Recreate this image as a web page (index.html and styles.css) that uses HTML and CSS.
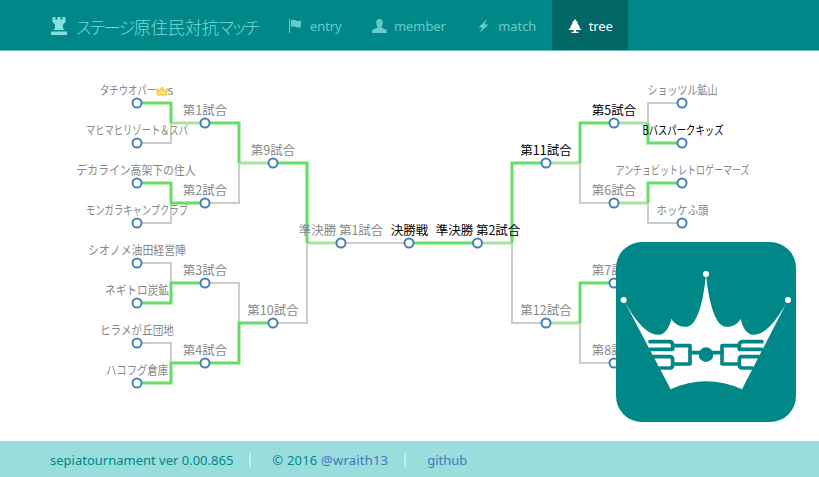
FILE: index.html
```html
<!DOCTYPE html>
<html lang="ja">
<head>
<meta charset="utf-8">
<title>ステージ原住民対抗マッチ</title>
<link rel="stylesheet" href="styles.css">
</head>
<body>
<header class="topbar">
  <a class="brand" href="#">
    <svg class="brand-icon" viewBox="0 0 18 18"><path d="M2.500 0h3v2.500h2V0h3v2.500h2V0h3v5l-2.500 2.500V11l1.500 2H3.500L5 11V7.500L2.500 5z"/><path d="M1 14.500h16V18H1z"/></svg>
    <span><span class="kana">ステージ</span>原住民対抗<span class="kana">マッチ</span></span>
  </a>
  <nav class="nav">
    <a class="nav-item" href="#"><svg class="nav-icon" viewBox="0 0 14 14"><path d="M0 0h1v14H0zM2 1.500c2-1.200 4-.8 5 0s3 .8 5 0v6.500c-2 .9-4 .8-5 0s-3-1-5 0z"/></svg>entry</a>
    <a class="nav-item" href="#"><svg class="nav-icon nav-icon-wide" viewBox="0 0 15 14"><path d="M7.500 0c2 0 3.300 1.500 3.300 3.500S9.500 7.500 9.500 8.300c0 1 5.300 1.700 5.300 3.700v2H.2v-2c0-2 5.300-2.700 5.300-3.700C5.500 7.500 4.200 5.500 4.200 3.500S5.500 0 7.500 0z"/></svg>member</a>
    <a class="nav-item" href="#"><svg class="nav-icon" viewBox="0 0 14 14"><path d="M10 0 1.500 8.500h4L2.500 14l9-8.500h-4z"/></svg>match</a>
    <a class="nav-item is-active" href="#"><svg class="nav-icon" viewBox="0 0 14 14"><path d="M7 0l3.300 4.200H9l3 3.300h-1.300L13.500 11H8.200v1.800h2.300v1.200h-7v-1.200h2.300V11H.5l2.800-3.500H2l3-3.300H3.700z"/></svg>tree</a>
  </nav>
</header>

<main class="stage">
  <svg class="bracket" viewBox="0 0 819 390" width="819" height="390">
    <g transform="translate(0 -51)">
      <g class="wire">
        <path d="M137 143H171V123"/>
        <path d="M137 223H171V203"/>
        <path d="M137 263H171V283"/>
        <path d="M137 343H171V363"/>
        <path d="M205 203H239V163"/>
        <path d="M205 283H239V323"/>
        <path d="M273 323H307V243"/>
        <path d="M307 243H477"/>
        <path d="M512 243V323H546"/>
        <path d="M546 163H580V203H614"/>
        <path d="M546 323H580V363H614"/>
        <path d="M614 123H648V103H682"/>
        <path d="M614 203H648V223H682"/>
      </g>
      <g class="wire-pale">
        <path d="M171 123H205"/>
        <path d="M239 163H273"/>
        <path d="M307 243H341"/>
        <path d="M477 243H512"/>
        <path d="M546 163H580"/>
        <path d="M614 123H648"/>
        <path d="M614 203H648"/>
        <path d="M546 323H580"/>
      </g>
      <g class="wire-win">
        <path d="M137 103H171V123"/>
        <path d="M137 183H171V203H205"/>
        <path d="M137 303H171V283H205"/>
        <path d="M137 383H171V363H239V323H273"/>
        <path d="M205 123H239V163"/>
        <path d="M273 163H307V243"/>
        <path d="M409 243H477"/>
        <path d="M512 243V163H546"/>
        <path d="M580 163V123H614"/>
        <path d="M648 123V143H682"/>
        <path d="M648 203V183H682"/>
        <path d="M580 323V283H614"/>
      </g>
      <g class="nodes">
        <circle cx="137" cy="103" r="4.500"/><circle cx="137" cy="143" r="4.500"/>
        <circle cx="137" cy="183" r="4.500"/><circle cx="137" cy="223" r="4.500"/>
        <circle cx="137" cy="263" r="4.500"/><circle cx="137" cy="303" r="4.500"/>
        <circle cx="137" cy="343" r="4.500"/><circle cx="137" cy="383" r="4.500"/>
        <circle cx="205" cy="123" r="4.500"/><circle cx="205" cy="203" r="4.500"/>
        <circle cx="205" cy="283" r="4.500"/><circle cx="205" cy="363" r="4.500"/>
        <circle cx="273" cy="163" r="4.500"/><circle cx="273" cy="323" r="4.500"/>
        <circle cx="341" cy="243" r="4.500"/><circle cx="409" cy="243" r="4.500"/>
        <circle cx="477.500" cy="243" r="4.500"/>
        <circle cx="546" cy="163" r="4.500"/><circle cx="546" cy="323" r="4.500"/>
        <circle cx="614" cy="123" r="4.500"/><circle cx="614" cy="203" r="4.500"/>
        <circle cx="614" cy="283" r="4.500"/><circle cx="614" cy="363" r="4.500"/>
        <circle cx="682" cy="103" r="4.500"/><circle cx="682" cy="143" r="4.500"/>
        <circle cx="682" cy="183" r="4.500"/><circle cx="682" cy="223" r="4.500"/>
      </g>
      <path class="crown-back" d="M156.500 88.500l2.700 2 2.800-3.500 2.800 3.500 2.700-2-1 6.500h-9z"/>
      <path class="crown-band" d="M158.500 92.500h7v1h-7z"/>
      <g class="labels">
        <text x="128" y="95" textLength="56" lengthAdjust="spacingAndGlyphs">タチウオパー</text>
        <text x="170.500" y="95">s</text>
        <text x="137" y="135" textLength="102" lengthAdjust="spacingAndGlyphs">マヒマヒリゾート＆スパ</text>
        <text x="136" y="175" textLength="119" lengthAdjust="spacingAndGlyphs">デカライン高架下の住人</text>
        <text x="137" y="215" textLength="102" lengthAdjust="spacingAndGlyphs">モンガラキャンプクラブ</text>
        <text x="137" y="255" textLength="98" lengthAdjust="spacingAndGlyphs">シオノメ油田経営陣</text>
        <text x="137" y="295" textLength="64" lengthAdjust="spacingAndGlyphs">ネギトロ炭鉱</text>
        <text x="137" y="335" textLength="74" lengthAdjust="spacingAndGlyphs">ヒラメが丘団地</text>
        <text x="137" y="375" textLength="62" lengthAdjust="spacingAndGlyphs">ハコフグ倉庫</text>
        <text x="205" y="115">第1試合</text>
        <text x="205" y="195">第2試合</text>
        <text x="205" y="275">第3試合</text>
        <text x="205" y="355">第4試合</text>
        <text x="273" y="155">第9試合</text>
        <text x="273" y="315">第10試合</text>
        <text x="341" y="235">準決勝 第1試合</text>
        <text class="on" x="409.500" y="235">決勝戦</text>
        <text class="on" x="478" y="235">準決勝 第2試合</text>
        <text class="on" x="546" y="155">第11試合</text>
        <text x="546" y="315">第12試合</text>
        <text class="on" x="614" y="115">第5試合</text>
        <text x="614" y="195">第6試合</text>
        <text x="614" y="275">第7試合</text>
        <text x="614" y="355">第8試合</text>
        <text x="682.500" y="95" textLength="70" lengthAdjust="spacingAndGlyphs">ショッツル鉱山</text>
        <text class="on" x="683" y="135" textLength="81" lengthAdjust="spacingAndGlyphs">Bバスパークキッズ</text>
        <text x="682.500" y="175" textLength="134" lengthAdjust="spacingAndGlyphs">アンチョビットレトロゲーマーズ</text>
        <text x="682.500" y="215" textLength="52" lengthAdjust="spacingAndGlyphs">ホッケふ頭</text>
      </g>
    </g>
  </svg>
  <svg class="logo" viewBox="48 36 540 540" width="180" height="180">
    <rect class="logo-bg" x="48" y="36" width="540" height="540" rx="78"/>
    <g class="logo-crown">
      <circle cx="71" cy="210" r="9"/><circle cx="318" cy="132" r="9"/><circle cx="564" cy="210" r="9"/>
      <path d="M71 210C100 262 140 320 180 314C200 310 210 285 214 266C225 285 245 292 262 290C295 285 312 200 318 132C324 200 342 285 375 290C392 292 412 285 422 266C426 285 436 310 456 314C496 320 536 262 564 210L426 478Q318 430 212 478Z"/>
    </g>
    <circle class="logo-hub" cx="318" cy="374" r="22"/>
    <g class="logo-lines">
      <path d="M150 335H208Q218 335 218 346V358H150"/>
      <path d="M218 347H270V402H218"/>
      <path d="M160 380H210Q218 380 218 390V405Q218 414 210 414H180"/>
      <path d="M270 368H366"/>
      <path d="M486 335H428Q418 335 418 346V358H486"/>
      <path d="M418 347H366V402H418"/>
      <path d="M476 380H426Q418 380 418 390V405Q418 414 426 414H456"/>
    </g>
  </svg>
</main>

<footer class="foot">
  <span class="foot-item">sepiatournament ver 0.00.865</span>
  <span class="foot-sep"></span>
  <span class="foot-item foot-wide">© 2016 <a class="foot-link" href="#">@wraith13</a></span>
  <span class="foot-sep"></span>
  <a class="foot-link" href="#">github</a>
</footer>
</body>
</html>
```
FILE: styles.css
```css
* { box-sizing: border-box; }
html, body { margin: 0; height: 100%; }
body {
  display: flex;
  flex-direction: column;
  overflow: hidden;
  font-family: "Noto Sans", "Noto Sans CJK JP", sans-serif;
  background: #fff;
}
a { text-decoration: none; color: inherit; }

.topbar {
  height: 51px;
  flex: none;
  display: flex;
  padding-left: 50px;
  background: #008888;
  border-bottom: 1px solid #66bbbb;
  color: #77dddd;
}
.brand {
  display: flex;
  align-items: center;
  gap: 8px;
  width: 223px;
  padding-top: 2px;
  font-size: 17px;
  font-family: "Noto Sans CJK JP", sans-serif;
  font-feature-settings: "palt";
  font-weight: 300;
}
.kana { letter-spacing: -1.500px; }
.brand-icon { width: 18px; height: 18px; fill: #88dddd; flex: none; }
.nav { display: flex; }
.nav-item {
  display: flex;
  align-items: center;
  gap: 7px;
  padding: 2px 15.500px 0 16px;
  font-size: 13px;
  letter-spacing: -0.1px;
  color: #66cccc;
}
.nav-icon { width: 14px; height: 14px; fill: currentColor; flex: none; }
.nav-icon-wide { width: 15px; margin-left: -1px; }
.is-active { background: #006666; color: #fff; }

.stage { flex: 1; position: relative; }
.bracket { display: block; }
.wire, .wire-pale, .wire-win { fill: none; }
.wire { stroke: #cccccc; stroke-width: 2; }
.wire-pale { stroke: #aae2a4; stroke-width: 3; }
.wire-win { stroke: #66dd66; stroke-width: 3; }
.nodes circle { fill: #fff; stroke: #4682b4; stroke-width: 2; }
.crown-back { fill: #ffd84d; stroke: #e8b020; stroke-width: 0.700; }
.crown-band { fill: #fff6d0; }
.labels text {
  text-anchor: middle;
  font-family: "Noto Sans CJK JP", sans-serif;
  font-size: 12.500px;
  fill: #888888;
}
.labels .on { fill: #000; }
.logo { position: absolute; left: 616px; top: 191px; }
.logo-bg { fill: #008888; }
.logo-crown { fill: #fff; }
.logo-hub { fill: #008888; }
.logo-lines {
  fill: none;
  stroke: #008888;
  stroke-width: 11;
  stroke-linecap: round;
  stroke-linejoin: round;
}

.foot {
  height: 36px;
  flex: none;
  display: flex;
  align-items: center;
  padding: 1px 0 0 50px;
  background: #99dddd;
  color: #008888;
  font-size: 13px;
}
.foot-wide { letter-spacing: 0.200px; }
.foot-link { color: #4477bb; }
.foot-sep {
  width: 2px;
  height: 14px;
  margin: 0 21px 0 16px;
  background: #c4efe8;
}
```
